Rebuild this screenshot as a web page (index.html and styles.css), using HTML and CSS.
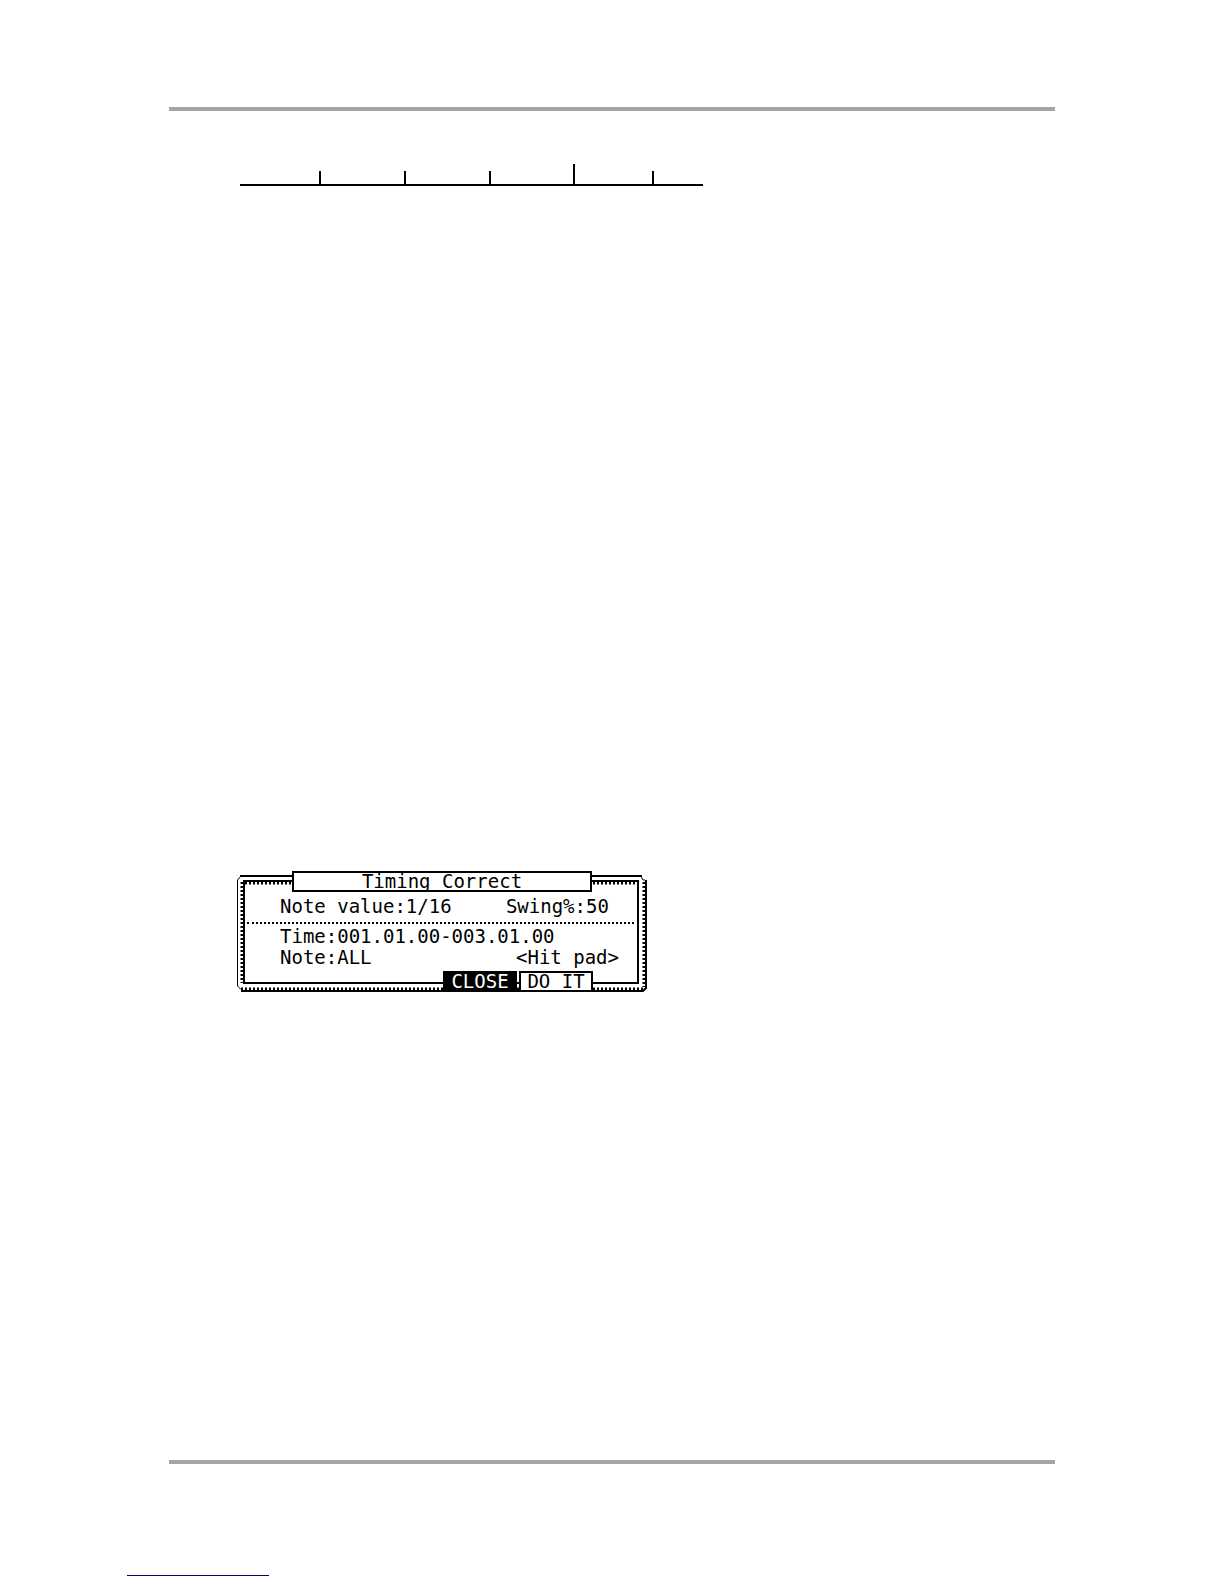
FILE: index.html
```html
<!DOCTYPE html>
<html lang="en">
<head>
<meta charset="utf-8">
<title>Timing Correct</title>
<link rel="stylesheet" href="styles.css">
</head>
<body>
<main class="page">
  <section class="content">
    <svg class="timeline" width="463" height="22" viewBox="0 0 463 22" role="img" aria-label="Timeline">
      <path d="M0 21H463M80 7V21M165 7V21M250 7V21M334 0V21M413 7V21"/>
    </svg>
    <form class="dialog">
      <svg class="frame" width="412" height="121" viewBox="0 0 412 121" aria-hidden="true">
        <path class="line" d="M4 118.5L.5 115V9L4 5M404 5L406 9H408"/>
        <path class="line heavy" d="M3 5H405M7 112V10H401V112Z"/>
        <path class="teeth" d="M8 12H400M5 11V112M407 11V116M4 118H407"/>
        <path class="line heavy" d="M409 9V117L406 120H4"/>
      </svg>
      <h1 class="title">Timing Correct</h1>
      <div class="row first">
        <label>Note value:<input class="w4" value="1/16"></label>
        <label>Swing%:<input class="w2" value="50"></label>
      </div>
      <div class="row">
        <label>Time:<input class="w19" value="001.01.00-003.01.00"></label>
      </div>
      <div class="row">
        <label>Note:<input class="w4" value="ALL"></label>
        <span>&lt;Hit pad&gt;</span>
      </div>
      <div class="actions">
        <button class="close" type="button">CLOSE</button>
        <button type="button">DO IT</button>
      </div>
    </form>
  </section>
</main>
<footer class="footer"><a class="link" href="#" aria-label="Website"></a></footer>
</body>
</html>
```
FILE: styles.css
```css
* { box-sizing: border-box; }
body { margin: 0; background: #fff; color: #000; }
.page {
  margin: 107px 169px 0;
  border-top: 4px solid #a6a6a6;
  border-bottom: 4px solid #a6a6a6;
}
.content { padding: 53px 0 468px 68px; }
.timeline { display: block; margin-left: 3px; fill: none; stroke: #000; stroke-width: 2; }
.dialog {
  position: relative;
  width: 412px;
  margin-top: 685px;
  font: 19px/21px "DejaVu Sans Mono", monospace;
}
.frame { position: absolute; inset: 0; fill: none; z-index: -1; }
.line { stroke: #000; stroke-width: 1; }
.heavy { stroke-width: 2; }
.teeth { stroke: #000; stroke-width: 3; stroke-dasharray: 2 2; }
.title {
  width: 300px;
  height: 21px;
  margin: 0 0 0 55px;
  border: 2px solid #000;
  background: #fff;
  font: inherit;
  line-height: 17px;
  text-align: center;
}
.row { display: flex; justify-content: space-between; height: 21px; padding: 0 30px 0 43px; }
.row label { display: flex; }
.first { height: 28px; margin: 4px 15px 2px 10px; padding: 0 22px 0 33px; border-bottom: 2px dotted #000; }
.row input { height: 21px; padding: 0; border: 0; background: none; color: inherit; font: inherit; }
.w2 { width: 26px; }
.w4 { width: 48px; }
.w19 { width: 220px; }
.actions { display: flex; gap: 2px; margin: 3px 0 0 206px; }
.actions button {
  width: 74px;
  height: 21px;
  padding: 0;
  border: 2px solid #000;
  background: #fff;
  color: #000;
  font: inherit;
  line-height: 17px;
}
.actions .close { background: #000; color: #fff; }
.footer { padding: 111px 127px 8px; }
.link { display: block; width: 142px; border-bottom: 1px solid #000080; }
```
